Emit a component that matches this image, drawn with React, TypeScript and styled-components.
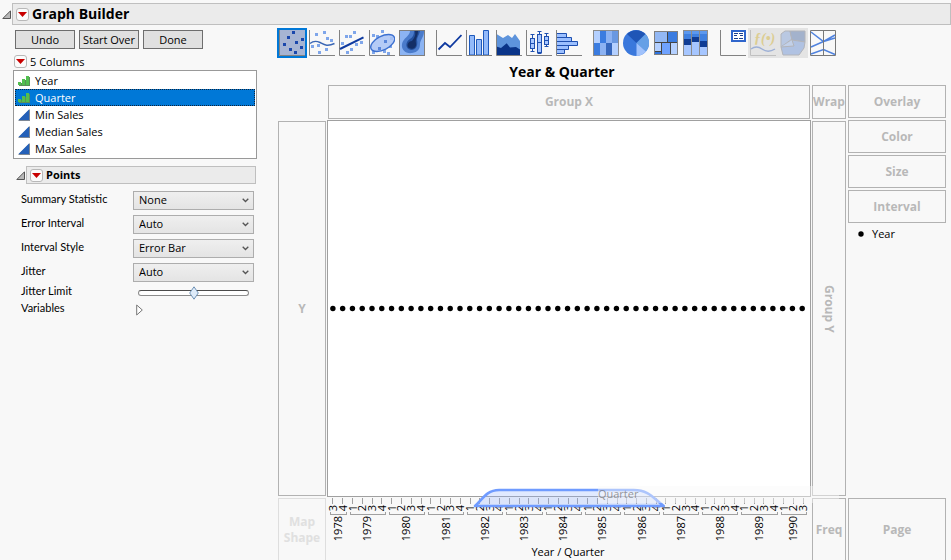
import React, { useState } from "react";
import styled, { createGlobalStyle, css } from "styled-components";

const GlobalStyle = createGlobalStyle`
  *, *::before, *::after { box-sizing: border-box; }
  body {
    margin: 0;
    background: #f8f8f8;
    color: #000;
    font-family: "Open Sans", "Noto Sans", sans-serif;
    font-size: 11px;
    line-height: 16px;
  }
  button, select, input { font: inherit; color: inherit; margin: 0; }
`;

const line = "#b2b2b2";

const Page = styled.div`
  display: flex;
  flex-direction: column;
  height: 100vh;
  min-height: 420px;
  overflow: hidden;
`;

const OutlineRow = styled.div<{ $nested?: boolean }>`
  display: flex;
  align-items: center;
  gap: 1px;
  padding-left: ${(p) => (p.$nested ? 3 : 2)}px;
  padding-right: ${(p) => (p.$nested ? 1 : 0)}px;
  margin-top: ${(p) => (p.$nested ? 7 : 3)}px;
`;

const OutlineBar = styled.div<{ $nested?: boolean }>`
  flex: 1;
  display: flex;
  align-items: center;
  gap: 3px;
  height: ${(p) => (p.$nested ? 18 : 22)}px;
  padding-left: 3px;
  border: 1px solid #bfbfbf;
  background: #ebebeb;
`;

const MainHeading = styled.h1`
  margin: 0;
  font-size: 14px;
  line-height: 20px;
  font-weight: 700;
`;

const SubHeading = styled.h2`
  margin: 0;
  font-size: 11px;
  line-height: 16px;
  font-weight: 700;
`;

const PlainButton = styled.button`
  display: flex;
  padding: 0;
  border: 0;
  background: none;
`;

const MenuButton = styled.button`
  display: flex;
  align-items: center;
  justify-content: center;
  width: 13px;
  height: 13px;
  padding: 0;
  border: 1px solid #b8b8b8;
  border-radius: 3px;
  background: #fbfbfb;
`;

const Body = styled.div`
  flex: 1;
  min-height: 0;
  display: flex;
  gap: 20px;
`;

const SidePanel = styled.aside`
  flex: none;
  width: 257px;
  padding-left: 13px;
`;

const Actions = styled.div`
  display: flex;
  gap: 4px;
  padding: 5px 0 0 2px;
`;

const ActionButton = styled.button`
  width: 60px;
  height: 19px;
  padding: 0;
  border: 1px solid #6e6e6e;
  background: #e0e0e0;
  line-height: 16px;
  white-space: nowrap;
`;

const ColumnsHeader = styled.div`
  display: flex;
  align-items: center;
  gap: 3px;
  height: 21px;
  padding: 4px 0 0 1px;
`;

const ColumnList = styled.ul`
  list-style: none;
  margin: 0;
  padding: 1px;
  border: 1px solid #999;
  background: #fff;
`;

const ColumnItem = styled.li<{ $selected: boolean }>`
  display: flex;
  align-items: center;
  gap: 5px;
  height: 17px;
  padding-left: 2px;
  border: 1px solid transparent;
  ${(p) =>
    p.$selected &&
    css`
      background: #0078d7;
      color: #fff;
      border: 1px dotted #10243c;
    `}
`;

const Settings = styled.div`
  display: flex;
  flex-direction: column;
  padding: 4px 3px 0 8px;
`;

const Setting = styled.div<{ $compact?: boolean }>`
  display: flex;
  align-items: center;
  justify-content: space-between;
  height: ${(p) => (p.$compact ? 17 : 24)}px;
`;

const SettingLabel = styled.label`
  padding-bottom: 3px;
  font-family: Lato, "Open Sans", sans-serif;
  line-height: 14px;
`;

const SelectBox = styled.span`
  display: grid;
  align-items: center;
  width: 121px;
  & > * { grid-area: 1 / 1; }
  & > svg { justify-self: end; margin-right: 5px; pointer-events: none; }
`;

const Select = styled.select`
  appearance: none;
  width: 100%;
  height: 19px;
  padding: 0 5px;
  border: 1px solid #adadad;
  border-radius: 0;
  background: linear-gradient(#efefef, #e4e4e4);
`;

const diamond =
  "data:image/svg+xml,%3Csvg xmlns='http://www.w3.org/2000/svg' width='10' height='14'%3E%3Cpath d='M5 .8L9.3 7 5 13.2.7 7z' fill='%23deebf9' stroke='%236f92b5'/%3E%3C/svg%3E";

const Slider = styled.input`
  appearance: none;
  width: 111px;
  height: 14px;
  margin-right: 5px;
  background: none;
  &::-webkit-slider-runnable-track {
    height: 6px;
    border: 1px solid #8c8c8c;
    border-top-color: #4c4c4c;
    border-radius: 3px;
    background: #fff;
  }
  &::-webkit-slider-thumb {
    appearance: none;
    width: 10px;
    height: 14px;
    margin-top: -5px;
    background: url("${diamond}") no-repeat;
  }
`;

const DisclosureSlot = styled.span`
  display: flex;
  width: 118px;
`;

const Workspace = styled.main`
  flex: 1;
  min-width: 0;
  display: flex;
  flex-direction: column;
`;

const Toolbar = styled.div`
  flex: none;
  display: flex;
  gap: 7px;
  padding-top: 3px;
`;

const ToolGroup = styled.div`
  display: flex;
`;

const ToolButton = styled.button<{ $active?: boolean }>`
  display: flex;
  align-items: center;
  justify-content: center;
  width: 30px;
  height: 30px;
  padding: 0;
  border: ${(p) => (p.$active ? "2px solid #0078d7" : "0")};
  background: ${(p) => (p.$active ? "#a7b4d3" : "transparent")};
  &:disabled { background: #e4e4e4; }
`;

const Board = styled.div`
  flex: 1;
  min-height: 0;
  display: grid;
  grid-template-columns: 48px minmax(0, 1fr) 34px 98px;
  grid-template-rows: 25px 34px minmax(0, 1fr) 62px;
  gap: 2px;
  padding: 0 5px 0 1px;
`;

const GraphTitle = styled.h2`
  grid-column: 1 / 4;
  margin: 0;
  font-size: 14px;
  line-height: 28px;
  font-weight: 700;
  text-align: center;
`;

const Zone = styled.div<{ $col: number; $row: number; $faint?: boolean; $open?: boolean }>`
  grid-column: ${(p) => p.$col};
  grid-row: ${(p) => p.$row};
  display: flex;
  align-items: center;
  justify-content: center;
  border: 1px solid ${(p) => (p.$faint ? "#dedede" : line)};
  color: ${(p) => (p.$faint ? "#e0e0e0" : "#b8b8b8")};
  border-bottom-width: ${(p) => (p.$open ? 0 : 1)}px;
  font-size: 12px;
  font-weight: 700;
  text-align: center;
`;

const VerticalText = styled.span`
  writing-mode: vertical-rl;
`;

const RoleColumn = styled.div`
  grid-column: 4;
  grid-row: 2 / 4;
  display: flex;
  flex-direction: column;
  gap: 2px;
`;

const RoleZone = styled.div`
  display: flex;
  align-items: center;
  justify-content: center;
  height: 33px;
  border: 1px solid ${line};
  color: #b8b8b8;
  font-size: 12px;
  font-weight: 700;
`;

const Legend = styled.div`
  display: flex;
  align-items: center;
  gap: 8px;
  padding-left: 10px;
  height: 18px;
`;

const Plot = styled.div`
  grid-column: 2;
  grid-row: 3;
  margin: -1px;
  border: 1px solid #a0a0a0;
  background: #fff;
  & > svg { display: block; width: 100%; height: 100%; }
`;

const Axis = styled.div`
  grid-column: 2;
  grid-row: 4;
  position: relative;
  display: flex;
  flex-direction: column;
`;

const Years = styled.div`
  display: flex;
  padding-right: 2px;
`;

const YearGroup = styled.div<{ $count: number }>`
  flex: ${(p) => p.$count} 1 0;
  min-width: 0;
  display: flex;
  flex-direction: column;
  align-items: center;
  gap: 1px;
`;

const Quarters = styled.div`
  align-self: stretch;
  display: flex;
`;

const QuarterCell = styled.span`
  flex: 1 1 0;
  min-width: 0;
  display: flex;
  flex-direction: column;
  align-items: center;
  gap: 1px;
  &::before {
    content: "";
    width: 1px;
    height: 6px;
    background: #a0a0a0;
  }
`;

const Upright = styled.span`
  writing-mode: vertical-rl;
  transform: rotate(180deg);
  line-height: 12px;
`;

const Bracket = styled.span`
  align-self: stretch;
  height: 3px;
  margin: 0 1px 0 2px;
  border: 1px solid #a0a0a0;
  border-top: 0;
`;

const AxisTitle = styled.div`
  text-align: center;
  line-height: 16px;
  padding-right: 2px;
  margin-top: 3px;
`;

const DropShape = styled.svg`
  position: absolute;
  left: 30%;
  top: -10px;
  width: 40%;
  height: 21px;
`;

const DragLabel = styled.div`
  position: absolute;
  left: 56%;
  right: -29px;
  top: -12px;
  height: 17px;
  line-height: 15px;
  background: rgba(248, 248, 248, 0.45);
  color: rgba(70, 70, 70, 0.55);
`;

const Frame = () => <path d="M.5 0V25.500H26" fill="none" stroke="#828282" />;

const Dots = ({ at, fill }: { at: number[][]; fill: string }) => (
  <g fill={fill} shapeRendering="crispEdges">
    {at.map(([x, y]) => (
      <rect key={`${x}-${y}`} x={x - 1} y={y - 1} width="3" height="3" />
    ))}
  </g>
);

const BoxGlyph = ({ x, top, bottom, lo, hi, mid }: Record<string, number>) => (
  <g stroke="#1f50b0" fill="#a9c8ff">
    <path d={`M${x} ${lo}V${hi}M${x - 2} ${lo}h4M${x - 2} ${hi}h4`} />
    <rect x={x - 2} y={top} width="4" height={bottom - top} />
    <path d={`M${x - 2} ${mid}h4`} />
  </g>
);

const icons: Record<string, React.ReactNode> = {
  Points: (
    <>
      <Frame />
      <Dots fill="#1b47ac" at={[[14, 2], [9, 7], [23, 9], [17, 12], [5, 14], [22, 17], [11, 19], [16, 22]]} />
    </>
  ),
  Smoother: (
    <>
      <Frame />
      <Dots fill="#7fa6ea" at={[[15, 2], [7, 4], [18, 8], [22, 10], [3, 16], [9, 15], [17, 19], [10, 22]]} />
      <path d="M1 13.500C4 11 7 10.500 11 12.500S18 17 25.500 13.500" fill="none" stroke="#3a66b4" strokeWidth="1.400" />
    </>
  ),
  "Line Of Fit": (
    <>
      <Frame />
      <Dots fill="#7fa6ea" at={[[15, 2], [7, 6], [11, 6], [3, 13], [17, 14], [22, 12], [12, 19], [8, 22]]} />
      <path d="M1 19L24.500 7.300" stroke="#0f3aa0" strokeWidth="2" />
    </>
  ),
  Ellipse: (
    <>
      <Frame />
      <Dots fill="#7fa6ea" at={[[13, 1], [4, 5], [8, 6], [22, 8], [21, 16], [15, 21], [19, 23], [4, 22]]} />
      <ellipse cx="13.700" cy="13" rx="13" ry="6.800" transform="rotate(-27 13.700 13)" fill="#a9c3f6" fillOpacity=".85" stroke="#3c70d0" strokeWidth="1.400" />
      <Dots fill="#5a86da" at={[[16, 11], [10, 18]]} />
    </>
  ),
  Contour: (
    <>
      <rect x=".5" y=".5" width="25" height="25" fill="#8cb4f3" />
      <path d="M11 1C11 6 4 8 3 14s4 10 10 9 8-4 8-9c0-4 4-7 4-13z" fill="#4a7bcb" />
      <path d="M15 1c0 4-1 6-4 8-5 3-5 10 1 11 6 0 7-6 6-10 0-3 2-5 3-9z" fill="#24509c" />
      <path d="M16 1c1 5-1 7-3 10-4 0-6 5-3 7s8 0 7-5c-1-4 2-7 2-12z" fill="#142f66" />
      <rect x=".5" y=".5" width="25" height="25" fill="none" stroke="#7f7f7f" />
    </>
  ),
  Line: (
    <>
      <Frame />
      <path d="M2.500 19.500L9 13l5 4L25.500 5" fill="none" stroke="#0f3aa0" strokeWidth="1.800" />
    </>
  ),
  Bar: (
    <>
      <path d="M3.500 25V5.500h5V25zM10.500 25V9.500h5V25zM17.500 25V.5h5V25z" fill="#93bafa" stroke="#1f5abc" />
      <Frame />
    </>
  ),
  Area: (
    <>
      <path d="M.5 4L7 8l5-3 4 3 3-4 5 7v14H.5z" fill="#5e94dc" />
      <path d="M.5 16.500L5 18l5.700-4.700L14 17.500l6-.5 4 2.500V25H.5z" fill="#0a3488" />
      <Frame />
    </>
  ),
  "Box Plot": (
    <>
      <Frame />
      <BoxGlyph x={6.5} lo={4.5} hi={21.5} top={8.5} bottom={18.5} mid={13.5} />
      <BoxGlyph x={13.5} lo={1.5} hi={23.5} top={4.5} bottom={22.5} mid={12.5} />
      <BoxGlyph x={20.5} lo={3.5} hi={16.5} top={6.5} bottom={14.5} mid={10.5} />
    </>
  ),
  Histogram: (
    <>
      <path d="M.5 3.500h10v4H.5zM.5 7.500h15v4H.5zM.5 11.500h21v4H.5zM.5 15.500h12v4H.5zM.5 19.500h8v4H.5z" fill="#9cc0ff" stroke="#1f50b0" />
      <Frame />
    </>
  ),
  Heatmap: (
    <g shapeRendering="crispEdges">
      {["#b4d0ff", "#3b7ce0", "#8cb2f2", "#6a98e0", "#3b7ce0", "#8cb2f2", "#3667bd", "#b4d0ff"].map((c, i) => (
        <rect key={i} x={1 + (i % 4) * 6} y={i < 4 ? 1 : 13} width="6" height="12" fill={c} />
      ))}
      <rect x=".5" y=".5" width="25" height="25" fill="none" stroke="#8a8a8a" />
    </g>
  ),
  Pie: (
    <>
      <circle cx="13" cy="13" r="13" fill="#3a78dc" />
      <path d="M13.500 13L4 4A13 13 0 0 1 22.500 4z" fill="#1f55b6" />
      <path d="M13.500 13L22.500 4A13 13 0 0 1 23 21.500z" fill="#65a0e6" />
      <path d="M13.500 13L23 21.500A13 13 0 0 1 13.500 26z" fill="#a0c2fc" />
    </>
  ),
  Treemap: (
    <g shapeRendering="crispEdges">
      <rect x="1" y="1" width="24" height="24" fill="#444" />
      <rect x="2" y="2" width="12" height="10" fill="#93b8f4" />
      <rect x="15" y="2" width="9" height="10" fill="#3b7ce0" />
      <rect x="2" y="13" width="6" height="8" fill="#b4d0ff" />
      <rect x="2" y="22" width="6" height="2" fill="#2f74e0" />
      <rect x="9" y="13" width="8" height="11" fill="#6fa2ff" />
      <rect x="18" y="13" width="6" height="11" fill="#b4d0ff" />
      <rect x="1.500" y="1.500" width="23" height="23" fill="none" stroke="#808080" />
    </g>
  ),
  Mosaic: (
    <g shapeRendering="crispEdges">
      <rect x="0" y="0" width="25" height="26" fill="#8c8c8c" />
      {[[1, 9, 6], [9, 7, 5], [17, 11, 6]].map(([x, y, h]) => (
        <g key={x}>
          <rect x={x} y="1" width="7" height={y} fill="#3f80e0" />
          <rect x={x} y="1" width="7" height="3" fill="#5c98ee" />
          <rect x={x} y={y} width="7" height={h} fill="#0f3c94" />
          <rect x={x} y={y + h} width="7" height={25 - y - h} fill="#a6c6ff" />
        </g>
      ))}
    </g>
  ),
  "Caption Box": (
    <>
      <Frame />
      <rect x="12" y="1" width="13" height="10" fill="#fff" stroke="#2f66cc" strokeWidth="2" />
      <path d="M14 3.500h4m1 0h4M14 5.500h3m3 0h3M14 8.500h4m1 0h4" stroke="#1c3f8c" />
    </>
  ),
  Formula: (
    <>
      <path d="M.5 0V25.500H26" fill="none" stroke="#c0c0c0" />
      <text x="4" y="13" fontFamily="Liberation Serif, serif" fontStyle="italic" fontWeight="700" fontSize="14" fill="#dccd92">ƒ(•)</text>
      <path d="M1 19c4-3 7-3 11 0s8 3 13 0" fill="none" stroke="#9db0d6" strokeWidth="1.400" />
    </>
  ),
  "Map Shapes": (
    <g stroke="#b2b4ba">
      <path d="M1 4l4-3h5l2 8-11 8z" fill="#b9c8e2" />
      <path d="M10 1h15v11l-13-2z" fill="#a3b2cc" />
      <path d="M12 10l13 2-1 6-5 7H3L1 17z" fill="#b0c2e2" />
      <path d="M12 10l2 6-13 1" fill="#c2d0e8" />
    </g>
  ),
  Parallel: (
    <>
      <path d="M1 2l12.500 9.500L25 5M1 17l12.500-5.500L25 8M1 24l12.500-4.500L25 24.500" fill="none" stroke="#4f82de" strokeWidth="1.500" />
      <path d="M.5.5h25v25H.5zM13.500.5v25" fill="none" stroke="#787878" />
    </>
  ),
};

const groups = [
  ["Points", "Smoother", "Line Of Fit", "Ellipse", "Contour"],
  ["Line", "Bar", "Area", "Box Plot", "Histogram"],
  ["Heatmap", "Pie", "Treemap", "Mosaic"],
  ["Caption Box", "Formula", "Map Shapes", "Parallel"],
];
const unavailable = ["Formula", "Map Shapes"];

const columns = [
  { name: "Year", ordinal: true },
  { name: "Quarter", ordinal: true },
  { name: "Min Sales", ordinal: false },
  { name: "Median Sales", ordinal: false },
  { name: "Max Sales", ordinal: false },
];

const settings = [
  { id: "summary", label: "Summary Statistic", options: ["None", "Mean", "Median"] },
  { id: "error", label: "Error Interval", options: ["Auto", "None"] },
  { id: "style", label: "Interval Style", options: ["Error Bar", "Band"] },
  { id: "jitter", label: "Jitter", options: ["Auto", "None"] },
];

const years = Array.from({ length: 13 }, (_, i) => {
  const year = 1978 + i;
  const quarters = year === 1978 ? [3, 4] : year === 1990 ? [1, 2, 3] : [1, 2, 3, 4];
  return { year, quarters };
});
const pointCount = years.reduce((n, y) => n + y.quarters.length, 0);

const RedTriangle = ({ label }: { label: string }) => (
  <MenuButton aria-label={label}>
    <svg width="9" height="5" viewBox="0 0 9 5">
      <path d="M0 0h9L4.500 5z" fill="#c80000" />
    </svg>
  </MenuButton>
);

const Disclosure = ({ label }: { label: string }) => (
  <PlainButton aria-label={label}>
    <svg width="9" height="9" viewBox="0 0 9 9">
      <path d="M8.500.8V8.500H.8z" fill="#b8b8b8" stroke="#555" />
    </svg>
  </PlainButton>
);

const OrdinalIcon = () => (
  <svg width="12" height="11" viewBox="0 0 12 11" shapeRendering="crispEdges">
    <path d="M1 11V8h3V5h4V2h4v9z" fill="#5a8f58" />
    <path d="M0 10V7h3v3zM4 10V4h3v6zM8 10V1h3v9z" fill="#52bf50" />
  </svg>
);

const ContinuousIcon = () => (
  <svg width="12" height="12" viewBox="0 0 12 12">
    <path d="M12 0v12H0z" fill="#7d8794" />
    <path d="M11 .5V11H.5z" fill="#2460b8" />
  </svg>
);

export default function App() {
  const [selected, setSelected] = useState("Quarter");
  const [active, setActive] = useState("Points");

  return (
    <Page>
      <GlobalStyle />
      <OutlineRow>
        <Disclosure label="Toggle Graph Builder" />
        <OutlineBar>
          <RedTriangle label="Graph Builder menu" />
          <MainHeading>Graph Builder</MainHeading>
        </OutlineBar>
      </OutlineRow>
      <Body>
        <SidePanel>
          <Actions>
            <ActionButton>Undo</ActionButton>
            <ActionButton>Start Over</ActionButton>
            <ActionButton>Done</ActionButton>
          </Actions>
          <ColumnsHeader>
            <RedTriangle label="Columns menu" />
            <span>5 Columns</span>
          </ColumnsHeader>
          <ColumnList role="listbox" aria-label="Columns">
            {columns.map((c) => (
              <ColumnItem
                key={c.name}
                role="option"
                aria-selected={selected === c.name}
                $selected={selected === c.name}
                onClick={() => setSelected(c.name)}
              >
                {c.ordinal ? <OrdinalIcon /> : <ContinuousIcon />}
                {c.name}
              </ColumnItem>
            ))}
          </ColumnList>
          <OutlineRow $nested>
            <Disclosure label="Toggle Points" />
            <OutlineBar $nested>
              <RedTriangle label="Points menu" />
              <SubHeading>Points</SubHeading>
            </OutlineBar>
          </OutlineRow>
          <Settings>
            {settings.map((s) => (
              <Setting key={s.id}>
                <SettingLabel htmlFor={s.id}>{s.label}</SettingLabel>
                <SelectBox>
                  <Select id={s.id}>
                    {s.options.map((o) => (
                      <option key={o}>{o}</option>
                    ))}
                  </Select>
                  <svg width="7" height="5" viewBox="0 0 7 5">
                    <path d="M.7.7l2.800 2.800L6.300.7" fill="none" stroke="#555" strokeWidth="1.300" />
                  </svg>
                </SelectBox>
              </Setting>
            ))}
            <Setting $compact>
              <SettingLabel htmlFor="limit">Jitter Limit</SettingLabel>
              <Slider id="limit" type="range" defaultValue={50} />
            </Setting>
            <Setting $compact>
              <SettingLabel htmlFor="variables">Variables</SettingLabel>
              <DisclosureSlot>
                <PlainButton id="variables" aria-label="Show variables">
                  <svg width="7" height="12" viewBox="0 0 7 12">
                    <path d="M.7 1L6.300 6 .7 11z" fill="#fff" stroke="#777" />
                  </svg>
                </PlainButton>
              </DisclosureSlot>
            </Setting>
          </Settings>
        </SidePanel>

        <Workspace>
          <Toolbar role="toolbar" aria-label="Graph elements">
            {groups.map((g) => (
              <ToolGroup key={g[0]}>
                {g.map((name) => (
                  <ToolButton
                    key={name}
                    aria-label={name}
                    aria-pressed={active === name}
                    disabled={unavailable.includes(name)}
                    $active={active === name}
                    onClick={() => setActive(name)}
                  >
                    <svg width="26" height="26" viewBox="0 0 26 26">{icons[name]}</svg>
                  </ToolButton>
                ))}
              </ToolGroup>
            ))}
          </Toolbar>
          <Board>
            <GraphTitle>Year &amp; Quarter</GraphTitle>
            <Zone $col={2} $row={2}>Group X</Zone>
            <Zone $col={3} $row={2}>Wrap</Zone>
            <Zone $col={1} $row={3}>Y</Zone>
            <Plot>
              <svg role="img" aria-label="Points by year and quarter">
                {Array.from({ length: pointCount }, (_, i) => (
                  <circle key={i} cx={`${(((i + 0.5) / pointCount) * 99.4).toFixed(3)}%`} cy="50%" r="2.700" />
                ))}
              </svg>
            </Plot>
            <Zone $col={3} $row={3}>
              <VerticalText>Group Y</VerticalText>
            </Zone>
            <RoleColumn>
              {["Overlay", "Color", "Size", "Interval"].map((r) => (
                <RoleZone key={r}>{r}</RoleZone>
              ))}
              <Legend>
                <svg width="6" height="6" viewBox="0 0 6 6">
                  <circle cx="3" cy="3" r="2.700" />
                </svg>
                Year
              </Legend>
            </RoleColumn>
            <Zone $col={1} $row={4} $faint $open>Map Shape</Zone>
            <Axis>
              <Years>
                {years.map(({ year, quarters }) => (
                  <YearGroup key={year} $count={quarters.length}>
                    <Quarters>
                      {quarters.map((q) => (
                        <QuarterCell key={q}>
                          <Upright>{q}</Upright>
                        </QuarterCell>
                      ))}
                    </Quarters>
                    <Bracket />
                    <Upright>{year}</Upright>
                  </YearGroup>
                ))}
              </Years>
              <AxisTitle>Year / Quarter</AxisTitle>
              <DropShape viewBox="0 0 192 21" preserveAspectRatio="none">
                <path
                  d="M2 18C9 12 13 2 26 2H160C176 2 180 11 190 18z"
                  fill="#8fb0ff"
                  fillOpacity=".28"
                  stroke="#6f9bff"
                  strokeWidth="2.600"
                  strokeLinejoin="round"
                />
              </DropShape>
              <DragLabel>Quarter</DragLabel>
            </Axis>
            <Zone $col={3} $row={4} $open>Freq</Zone>
            <Zone $col={4} $row={4} $open>Page</Zone>
          </Board>
        </Workspace>
      </Body>
    </Page>
  );
}
